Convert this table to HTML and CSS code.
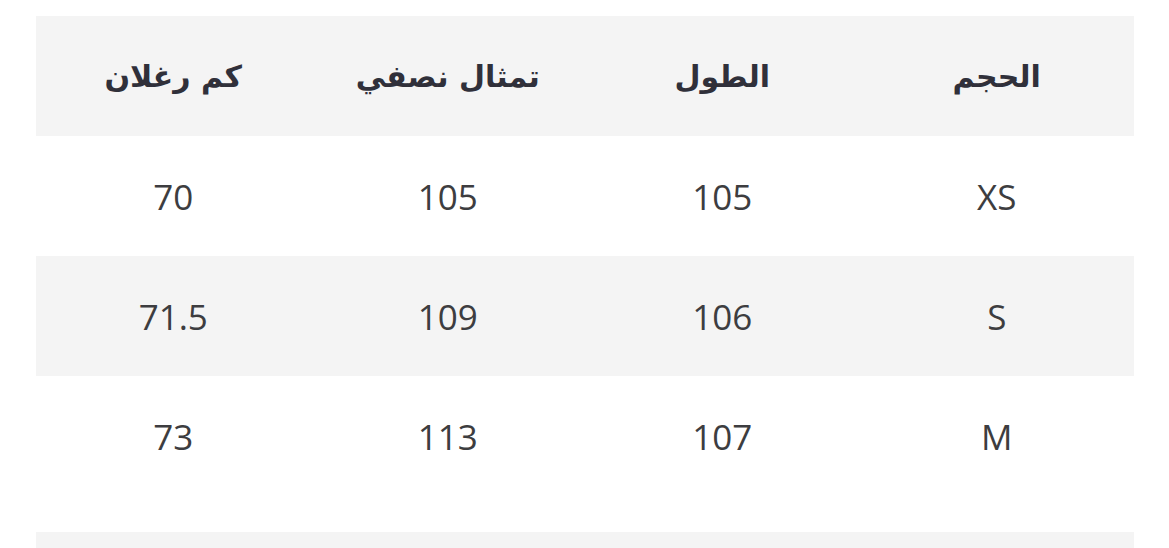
FILE: index.html
```html
<!DOCTYPE html>
<html lang="ar" dir="rtl">
<head>
<meta charset="utf-8">
<link rel="stylesheet" href="styles.css">
</head>
<body>
<div class="page">
  <table class="sizes">
    <thead>
      <tr><th>الحجم</th><th>الطول</th><th>تمثال نصفي</th><th>كم رغلان</th></tr>
    </thead>
    <tbody>
      <tr><td>XS</td><td>105</td><td>105</td><td>70</td></tr>
      <tr class="alt"><td>S</td><td>106</td><td>109</td><td>71.5</td></tr>
      <tr><td>M</td><td>107</td><td>113</td><td>73</td></tr>
    </tbody>
  </table>
  <div class="next"></div>
</div>
</body>
</html>
```
FILE: styles.css
```css
html, body {
  margin: 0;
  background: #fff;
}
.page {
  padding: 16px 35px 0 36px;
  height: 548px;
  box-sizing: border-box;
  overflow: hidden;
}
.sizes {
  width: 1098px;
  border-collapse: collapse;
  table-layout: fixed;
  color: #33333b;
}
.sizes th, .sizes td {
  height: 120px;
  padding: 0;
  text-align: center;
  vertical-align: middle;
}
.sizes th {
  background: #f4f4f4;
  font-family: "DejaVu Sans", "Noto Sans", sans-serif;
  font-weight: bold;
  font-size: 30px;
  color: #30303a;
}
.sizes td {
  font-family: "Open Sans", sans-serif;
  font-size: 35px;
  color: #3d3d40;
}
.sizes tr.alt td {
  background: #f4f4f4;
}
.next {
  margin-top: 36px;
  width: 1098px;
  height: 40px;
  background: #f4f4f4;
}
```
